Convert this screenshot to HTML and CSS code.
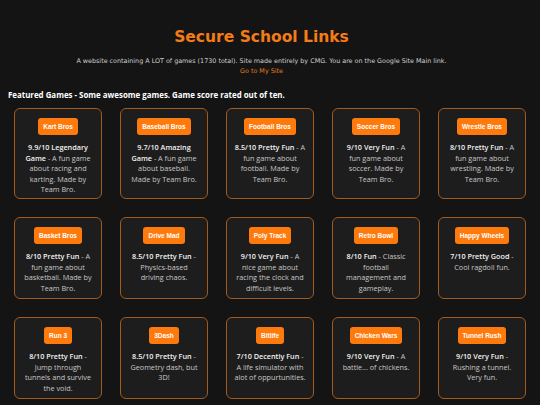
FILE: index.html
```html
<!DOCTYPE html>
<html lang="en">
  <head>
    <meta charset="UTF-8" />
    <meta name="viewport" content="width=device-width, initial-scale=1.0" />
    <title>Secure School Links</title>
    <link rel="stylesheet" href="styles.css">
  </head>
  <body>
    <div class="header">
      <h1>Secure School Links</h1>
      <p class="intro">A website containing A LOT of games (1730 total). Site made entirely by CMG. You are on the Google Site Main link.</p>
      <a class="site-link" href="#">Go to My Site</a>
    </div>

    <div class="container">
      <h2>Featured Games - Some awesome games. Game score rated out of ten.</h2>

      <!-- Featured game cards -->
      <div class="game-grid">
        <div class="game-card">
          <button>Kart Bros</button>
          <p><b>9.9/10 Legendary Game</b> - A fun game about racing and karting. Made by Team Bro.</p>
        </div>
        <div class="game-card">
          <button>Baseball Bros</button>
          <p><b>9.7/10 Amazing Game</b> - A fun game about baseball. Made by Team Bro.</p>
        </div>
        <div class="game-card">
          <button>Football Bros</button>
          <p><b>8.5/10 Pretty Fun</b> - A fun game about football. Made by Team Bro.</p>
        </div>
        <div class="game-card">
          <button>Soccer Bros</button>
          <p><b>9/10 Very Fun</b> - A fun game about soccer. Made by Team Bro.</p>
        </div>
        <div class="game-card">
          <button>Wrestle Bros</button>
          <p><b>8/10 Pretty Fun</b> - A fun game about wrestling. Made by Team Bro.</p>
        </div>

        <div class="game-card">
          <button>Basket Bros</button>
          <p><b>8/10 Pretty Fun</b> - A fun game about basketball. Made by Team Bro.</p>
        </div>
        <div class="game-card">
          <button>Drive Mad</button>
          <p><b>8.5/10 Pretty Fun</b> - Physics-based driving chaos.</p>
        </div>
        <div class="game-card">
          <button>Poly Track</button>
          <p><b>9/10 Very Fun</b> - A nice game about racing the clock and difficult levels.</p>
        </div>
        <div class="game-card">
          <button>Retro Bowl</button>
          <p><b>8/10 Fun</b> - Classic football management and gameplay.</p>
        </div>
        <div class="game-card">
          <button>Happy Wheels</button>
          <p><b>7/10 Pretty Good</b> - Cool ragdoll fun.</p>
        </div>

        <div class="game-card">
          <button>Run 3</button>
          <p><b>8/10 Pretty Fun</b> - Jump through tunnels and survive the void.</p>
        </div>
        <div class="game-card">
          <button>3Dash</button>
          <p><b>8.5/10 Pretty Fun</b> - Geometry dash, but 3D!</p>
        </div>
        <div class="game-card">
          <button>Bitlife</button>
          <p><b>7/10 Decently Fun</b> - A life simulator with alot of oppurtunities.</p>
        </div>
        <div class="game-card">
          <button>Chicken Wars</button>
          <p><b>9/10 Very Fun</b> - A battle... of chickens.</p>
        </div>
        <div class="game-card">
          <button>Tunnel Rush</button>
          <p><b>9/10 Very Fun</b> - Rushing a tunnel. Very fun.</p>
        </div>
      </div>
    </div>
  </body>
</html>
```

FILE: styles.css
```css
body {
  margin: 0;
  font-family: "DejaVu Sans", sans-serif;
  background-color: #141414;
  color: #e6e6e6;
}

.header {
  text-align: center;
  padding: 27px 17px 0 0;
}

.header h1 {
  margin: 0;
  font-size: 15.5px;
  font-weight: bold;
  color: #f47c17;
  line-height: 20px;
}

.intro {
  margin: 9px 0 0;
  font-size: 6.4px;
  line-height: 10px;
  color: #d0d0d0;
}

.site-link {
  display: block;
  font-size: 6.4px;
  line-height: 10px;
  color: #e47b22;
  text-decoration: none;
}

.container {
  padding: 0 14px;
}

.container h2 {
  margin: 13px 0 7px -6px;
  font-family: "Open Sans", sans-serif;
  font-size: 7.9px;
  font-weight: bold;
  color: #fff;
  line-height: 12px;
}

.game-grid {
  display: grid;
  grid-template-columns: repeat(5, 1fr);
  gap: 18px;
}

.game-card {
  min-height: 82px;
  box-sizing: border-box;
  background: #1d1d1d;
  border: 1px solid #a35a1c;
  border-radius: 6px;
  padding: 9px 7.25px 3px;
  display: flex;
  flex-direction: column;
  align-items: center;
  text-align: center;
}

.game-card button {
  background: #ff7a0c;
  color: #fff;
  border: none;
  border-radius: 3px;
  padding: 0 5px;
  height: 17px;
  font-family: "Liberation Sans", Arial, sans-serif;
  font-size: 6.5px;
  font-weight: bold;
  cursor: pointer;
}

.game-card p {
  margin: 7px 0 0;
  font-family: "Open Sans", sans-serif;
  font-size: 7.25px;
  line-height: 10.6px;
  color: #c8c8c8;
}

.game-card p b {
  font-weight: 600;
  color: #f2f2f2;
}
```
